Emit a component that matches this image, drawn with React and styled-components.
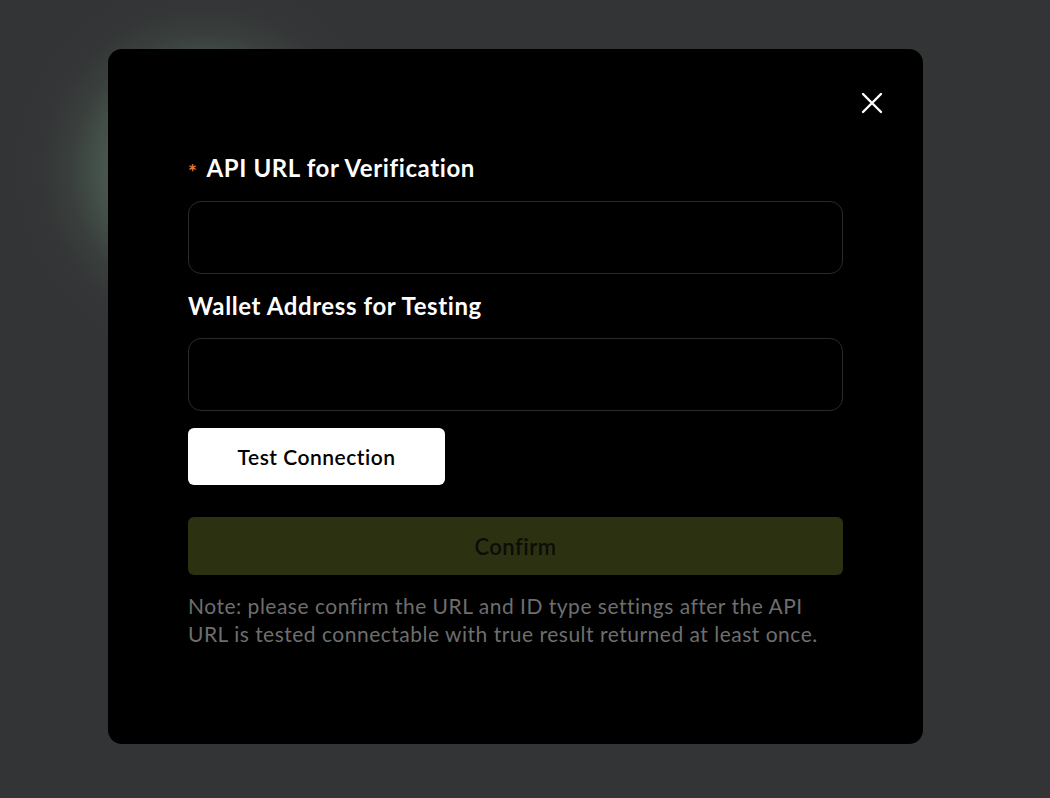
import React, { useState } from "react";
import styled, { createGlobalStyle } from "styled-components";

const Global = createGlobalStyle`
  html, body {
    margin: 0;
    padding: 0;
    height: 100%;
  }
  body {
    font-family: "Lato", "Noto Sans", sans-serif;
  }
  * {
    box-sizing: border-box;
  }
`;

function CloseIcon() {
  return (
    <svg width="22" height="22" viewBox="0 0 22 22" fill="none">
      <path
        d="M2 2L20 20M20 2L2 20"
        stroke="#fff"
        strokeWidth="2.4"
        strokeLinecap="round"
      />
    </svg>
  );
}

export default function App() {
  const [apiUrl, setApiUrl] = useState("");
  const [wallet, setWallet] = useState("");
  return (
    <Backdrop>
      <Global />
      <Modal>
        <CloseButton aria-label="close">
          <CloseIcon />
        </CloseButton>
        <Form>
          <Label>
            <Star>*</Star>API URL for Verification
          </Label>
          <Input value={apiUrl} onChange={(e) => setApiUrl(e.target.value)} />
          <Label $second>Wallet Address for Testing</Label>
          <Input value={wallet} onChange={(e) => setWallet(e.target.value)} />
          <TestButton>Test Connection</TestButton>
          <ConfirmButton disabled>Confirm</ConfirmButton>
          <Note>
            Note: please confirm the URL and ID type settings after the API URL
            is tested connectable with true result returned at least once.
          </Note>
        </Form>
      </Modal>
    </Backdrop>
  );
}

const Backdrop = styled.div`
  width: 100%;
  height: 100vh;
  overflow: hidden;
  display: flex;
  padding: 49px 0 0 108px;
  background:
    radial-gradient(
      circle at 205px 170px,
      #5a7566 0px,
      #506658 70px,
      rgba(74, 91, 81, 0.85) 100px,
      rgba(64, 74, 68, 0.5) 135px,
      rgba(56, 60, 60, 0.2) 165px,
      rgba(51, 52, 53, 0) 195px
    ),
    #333435;
`;

const Modal = styled.div`
  position: relative;
  width: 815px;
  height: 695px;
  background: #000;
  border-radius: 14px;
  padding: 100px 80px 0;
`;

const CloseButton = styled.button`
  position: absolute;
  top: 43px;
  right: 40px;
  width: 22px;
  height: 22px;
  padding: 0;
  border: none;
  background: transparent;
  cursor: pointer;
  display: flex;
`;

const Form = styled.div`
  display: flex;
  flex-direction: column;
`;

const Label = styled.div`
  color: #fff;
  font-size: 24px;
  font-weight: 700;
  letter-spacing: 0.6px;
  line-height: 30px;
  margin-top: ${(p) => (p.$second ? "17px" : "4px")};
  margin-bottom: 17px;
  display: flex;
  align-items: baseline;
`;

const Star = styled.span`
  color: #e8773a;
  font-size: 21px;
  font-weight: 700;
  margin-right: 9px;
  transform: translateY(3px);
`;

const Input = styled.input`
  height: 73px;
  width: 100%;
  background: #000;
  border: 1px solid #2a2a2a;
  border-radius: 13px;
  color: #fff;
  font-size: 18px;
  font-family: inherit;
  padding: 0 20px;
  outline: none;
`;

const TestButton = styled.button`
  margin-top: 17px;
  width: 257px;
  height: 57px;
  background: #fff;
  color: #000;
  border: none;
  border-radius: 6px;
  font-family: inherit;
  font-size: 21px;
  letter-spacing: 0.5px;
  font-weight: 600;
  cursor: pointer;
`;

const ConfirmButton = styled.button`
  margin-top: 32px;
  width: 100%;
  height: 58px;
  background: #2c3112;
  color: #0c0d05;
  border: none;
  border-radius: 6px;
  font-family: inherit;
  font-size: 22px;
  letter-spacing: 0.5px;
  font-weight: 600;
`;

const Note = styled.p`
  margin: 17px 0 0;
  color: #6e6e6e;
  font-size: 21px;
  letter-spacing: 0.5px;
  line-height: 28px;
  max-width: 635px;
`;
